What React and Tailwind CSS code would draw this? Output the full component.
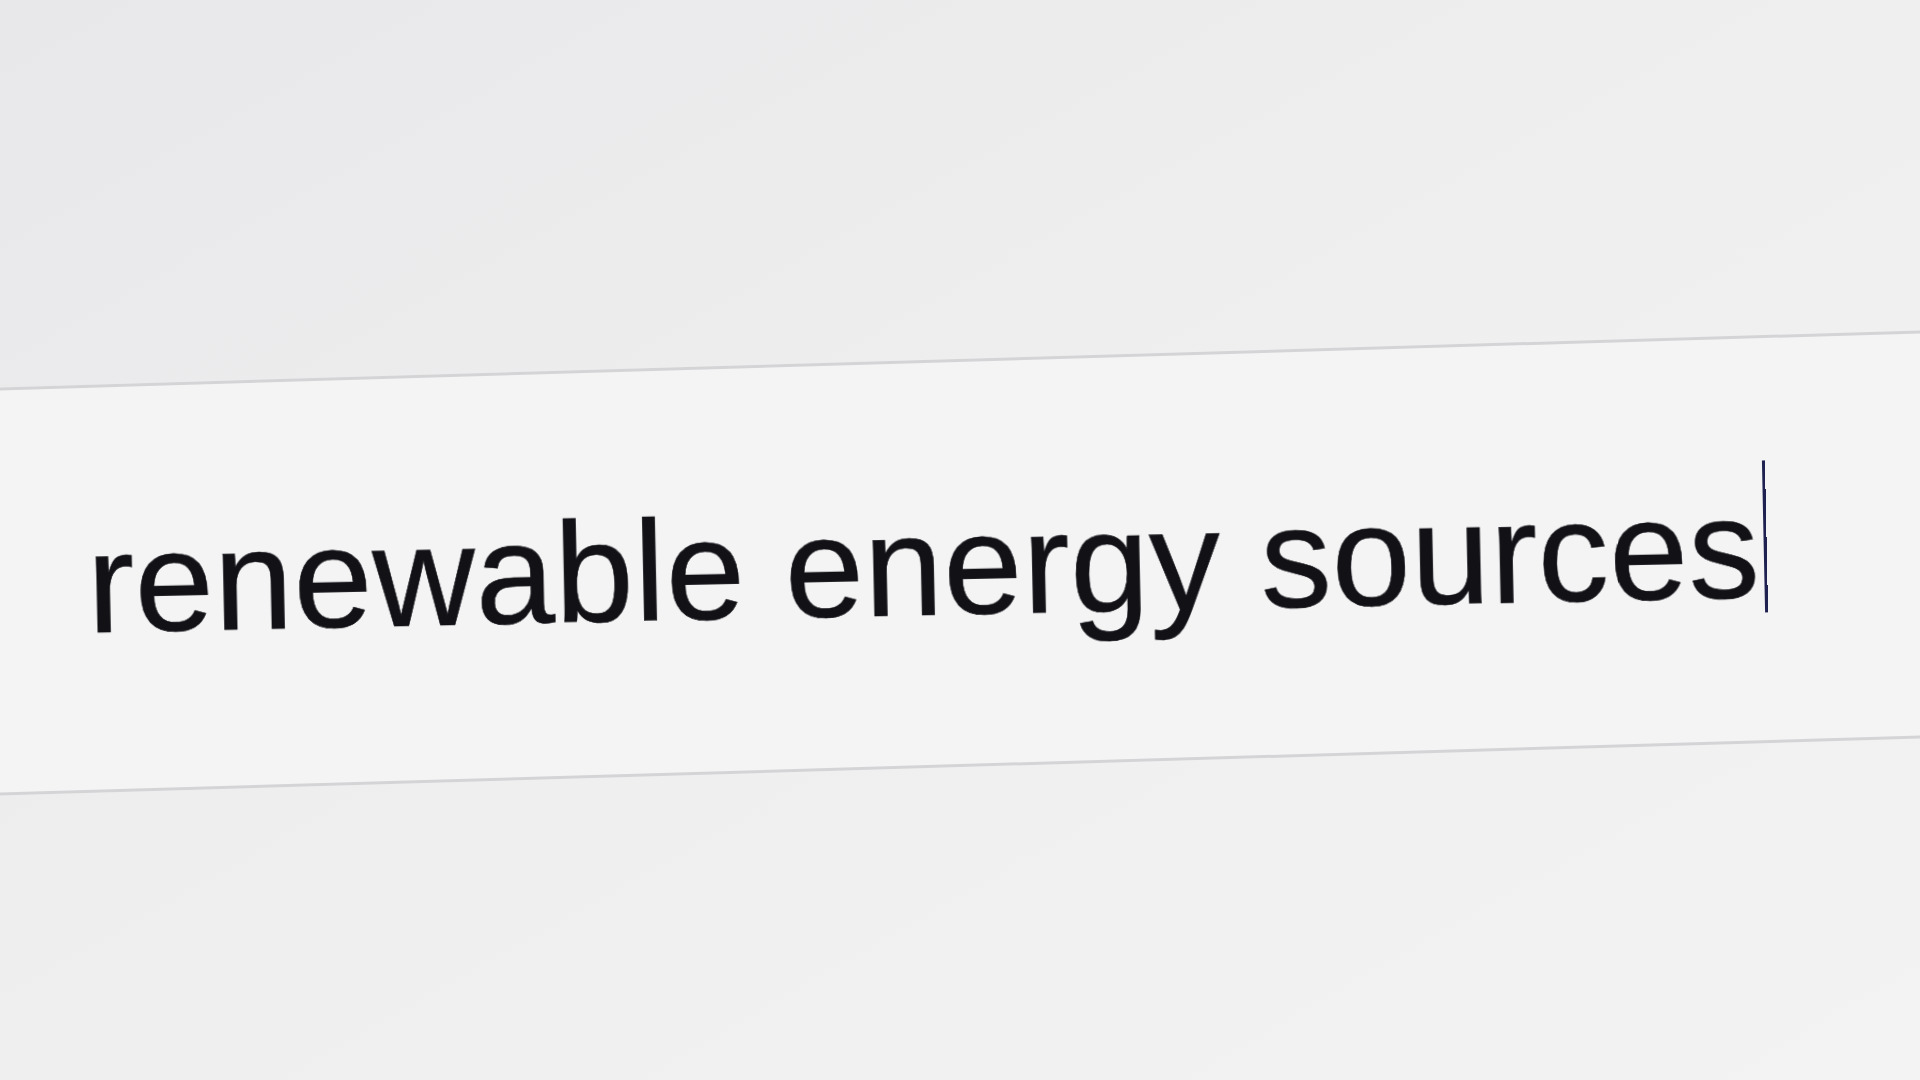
import React from 'react';

const SearchBand = ({ query }) => {
  return (
    <div className="w-[2000px] -ml-[40px] h-[408px] -rotate-[1.7deg] border-y-[3px] border-[#d4d4d7] bg-[#f4f4f5]">
      <div className="pl-[127px] pt-[100px]">
        <div className="inline-flex items-baseline rotate-[0.5deg] will-change-transform text-[142px] leading-[142px] tracking-[0.3px] text-[#111116] font-['Liberation_Sans',Arial,sans-serif] [-webkit-text-stroke:0.6px_#111116]">
          <span>{query}</span>
          <span className="inline-block ml-[4px] w-[3px] h-[152px] bg-[#1f2150] translate-y-[15px]" />
        </div>
      </div>
    </div>
  );
};

const App = () => {
  return (
    <div className="w-[1920px] h-[1080px] overflow-hidden bg-linear-to-br from-[#e8e8ea] via-[#efeff0] to-[#f3f3f4]">
      <div className="pt-[359px]">
        <SearchBand query="renewable energy sources" />
      </div>
    </div>
  );
};

export default App;
